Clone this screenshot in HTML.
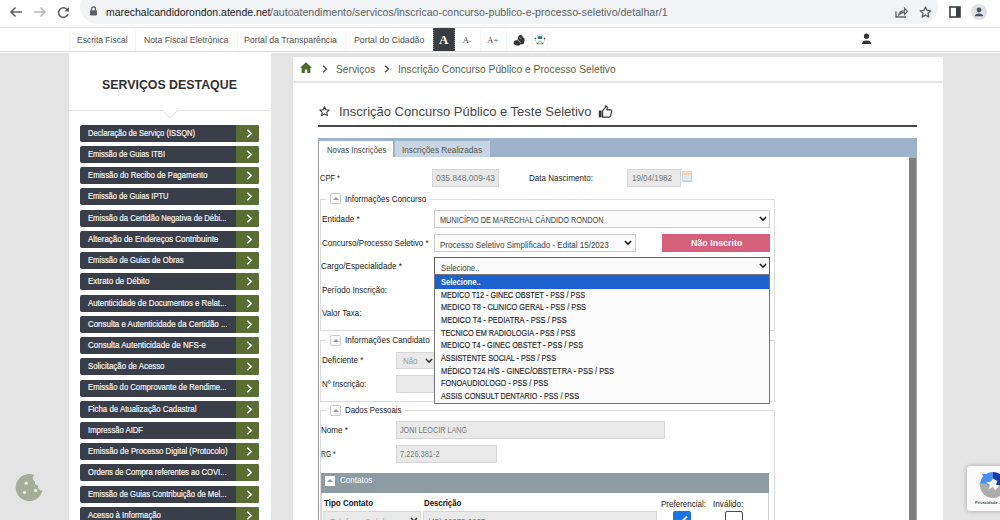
<!DOCTYPE html>
<html><head><meta charset="utf-8">
<style>
*{box-sizing:border-box;margin:0;padding:0}
html,body{width:1000px;height:520px;overflow:hidden;background:#e4e4e4;font-family:"Liberation Sans",sans-serif;position:relative}
.a{position:absolute}
.t{position:absolute;white-space:nowrap;line-height:0;transform-origin:0 0;z-index:10}
.sep{position:absolute;top:28px;height:23px;width:0;border-left:1px dotted #ececec}
.btn{position:absolute;left:80px;width:179px;height:17px;background:#3a3e48;border-radius:2px;overflow:hidden}
.btn i{position:absolute;left:156px;top:0;width:23px;height:17px;background:#5a6e33}
.btn svg{position:absolute;left:166px;top:4px}
.fs{position:absolute;border:1px solid #dcdcdc}
.tog{position:absolute;width:11px;height:11px;border:1px solid #c5cacf;border-radius:2px;background:#fff}
.tog:after{content:"";position:absolute;left:2px;top:3px;border-left:3px solid transparent;border-right:3px solid transparent;border-bottom:3px solid #999}
.inp{position:absolute;background:#e9e9e9;border:1px solid #d6d6d6}
.sel{position:absolute;background:#fafafa;border:1px solid #cdcdcd}
</style></head><body>
<!-- browser toolbar -->
<div class="a" style="left:0;top:0;width:1000px;height:28px;background:#fff;border-bottom:1px solid #e3e3e3"></div>
<div class="a" style="left:80px;top:-12px;width:858px;height:36px;background:#f1f3f4;border-radius:18px"></div>
<svg class="a" style="left:9px;top:6px" width="14" height="12" viewBox="0 0 14 12"><path d="M13 6H2M6.5 1.5L2 6l4.5 4.5" fill="none" stroke="#5f6368" stroke-width="1.6"/></svg>
<svg class="a" style="left:33px;top:6px" width="14" height="12" viewBox="0 0 14 12"><path d="M1 6h11M7.5 1.5L12 6l-4.5 4.5" fill="none" stroke="#b5b8bb" stroke-width="1.6"/></svg>
<svg class="a" style="left:57px;top:6px" width="13" height="13" viewBox="0 0 13 13"><path d="M10.6 4.2A4.8 4.8 0 1 0 11 8" fill="none" stroke="#5f6368" stroke-width="1.6"/><path d="M12 1v4.6H7.4z" fill="#5f6368"/></svg>
<svg class="a" style="left:90px;top:6px" width="7" height="10" viewBox="0 0 7 10"><path d="M1.5 4.5V3a2 2 0 0 1 4 0v1.5" fill="none" stroke="#5f6368" stroke-width="1.3"/><rect x="0" y="4.3" width="7" height="5.2" rx="0.8" fill="#5f6368"/></svg>
<svg class="a" style="left:895px;top:7px" width="13" height="11" viewBox="0 0 13 11"><path d="M1 4.5V10h10" fill="none" stroke="#5f6368" stroke-width="1.3"/><path d="M3.5 8.5C4 5 6.5 3.8 9.5 3.8V1.2L12.5 4.5 9.5 7.6V5.3C7 5.3 5 6.2 3.5 8.5z" fill="none" stroke="#5f6368" stroke-width="1.2"/></svg>
<svg class="a" style="left:919px;top:6px" width="13" height="12" viewBox="0 0 13 12"><path d="M6.5 1l1.6 3.4 3.7.4-2.8 2.5.8 3.7-3.3-1.9-3.3 1.9.8-3.7L1.2 4.8l3.7-.4z" fill="none" stroke="#5f6368" stroke-width="1.3" stroke-linejoin="round"/></svg>
<svg class="a" style="left:949px;top:6px" width="12" height="12" viewBox="0 0 12 12"><rect x="1" y="1" width="10" height="10" fill="none" stroke="#3c4043" stroke-width="1.6"/><rect x="7" y="1" width="4" height="10" fill="#3c4043"/></svg>
<div class="a" style="left:971px;top:4px;width:16px;height:16px;border-radius:8px;background:#dfe1e5"></div>
<svg class="a" style="left:971px;top:4px" width="16" height="16" viewBox="0 0 16 16"><circle cx="8" cy="6" r="2.4" fill="#4a5568"/><path d="M3.8 12.2c0-1.8 2-2.8 4.2-2.8s4.2 1 4.2 2.8z" fill="#4a5568"/></svg>

<!-- gov menu -->
<div class="a" style="left:0;top:28px;width:1000px;height:25px;background:#fff"></div><div class="a" style="left:0;top:51px;width:1000px;height:1px;background:#d9d9d9"></div>
<div class="sep" style="left:69px"></div>
<div class="sep" style="left:135px"></div>
<div class="sep" style="left:237px"></div>
<div class="sep" style="left:345px"></div>
<div class="a" style="left:433px;top:28px;width:22px;height:23px;background:#3a3d42;border-left:1px dotted #888;border-right:1px dotted #888"></div>
<div class="a" style="left:439px;top:33px;font-family:'Liberation Serif',serif;font-weight:bold;font-size:13px;line-height:13px;color:#fff">A</div>
<div class="a" style="left:462.5px;top:35.5px;font-family:'Liberation Serif',serif;font-size:9px;line-height:9px;color:#555">A<span style="font-size:7px">-</span></div>
<div class="a" style="left:487px;top:35.5px;font-family:'Liberation Serif',serif;font-size:9px;line-height:9px;color:#555">A+</div>
<div class="sep" style="left:480px"></div>
<div class="sep" style="left:506px"></div>
<div class="sep" style="left:532px"></div>
<div class="sep" style="left:547px"></div>
<svg class="a" style="left:513px;top:34px" width="13" height="13" viewBox="0 0 13 13"><path d="M6.5 1.2c1.3-.6 2.6 0 3 1.1l.3 1c1.3.3 2 1.4 1.8 2.7l-.4 2.2c-.3 1.6-1.6 2.4-3 2.2L7.6 10c-.6 1.4-2 2-3.4 1.6L2.4 11C.9 10.6.4 9.4.7 8.2 1 7 2 6.3 3.2 6.3h1.4L5 3.6c.1-1 .6-2 1.5-2.4z" fill="#353535"/><path d="M5 6.6c1 0 2 .8 2.3 2" fill="none" stroke="#ddd" stroke-width="0.8"/><path d="M6.2 3.8c.9.1 1.7.6 2.1 1.4" fill="none" stroke="#ccc" stroke-width="0.7"/></svg>
<svg class="a" style="left:534px;top:33px" width="12" height="13" viewBox="0 0 12 13"><circle cx="6" cy="6.5" r="4.6" fill="none" stroke="#bbb" stroke-width="0.9" stroke-dasharray="1.5 1"/><rect x="3.6" y="3.3" width="4.8" height="2.8" rx="1" fill="#1f7a73"/><path d="M3.5 10.8L6 7.5l2.5 3.3z" fill="#fff" stroke="#6a8a5a" stroke-width="0.7"/><circle cx="1.5" cy="5.5" r="0.8" fill="#444"/><circle cx="10.5" cy="5.5" r="0.8" fill="#444"/><circle cx="3.2" cy="10.5" r="0.7" fill="#444"/><circle cx="8.8" cy="10.5" r="0.7" fill="#444"/></svg>
<svg class="a" style="left:861px;top:33px" width="11" height="12" viewBox="0 0 11 12"><circle cx="5.5" cy="3.2" r="2.6" fill="#333"/><path d="M1 11c0-2.5 1.5-3.5 4.5-3.5S10 8.5 10 11z" fill="#333"/></svg>

<!-- sidebar -->
<div class="a" style="left:69px;top:53px;width:202px;height:467px;background:#fff"></div>
<div class="a" style="left:69px;top:110px;width:202px;height:1px;background:#e6e6e6"></div>
<svg class="a" style="left:161px;top:109px" width="18" height="10" viewBox="0 0 18 10"><path d="M0 1h18L9 9z" fill="#fff"/><path d="M1 1L9 8.6 17 1" fill="none" stroke="#dcdcdc" stroke-width="1"/></svg>
<div class="btn" style="top:124.80px"><i></i><svg width="7" height="9" viewBox="0 0 7 9"><path d="M1.2 0.8L5.2 4.5 1.2 8.2" fill="none" stroke="#fff" stroke-width="1.5"/></svg></div>
<div class="btn" style="top:146.03px"><i></i><svg width="7" height="9" viewBox="0 0 7 9"><path d="M1.2 0.8L5.2 4.5 1.2 8.2" fill="none" stroke="#fff" stroke-width="1.5"/></svg></div>
<div class="btn" style="top:167.26px"><i></i><svg width="7" height="9" viewBox="0 0 7 9"><path d="M1.2 0.8L5.2 4.5 1.2 8.2" fill="none" stroke="#fff" stroke-width="1.5"/></svg></div>
<div class="btn" style="top:188.49px"><i></i><svg width="7" height="9" viewBox="0 0 7 9"><path d="M1.2 0.8L5.2 4.5 1.2 8.2" fill="none" stroke="#fff" stroke-width="1.5"/></svg></div>
<div class="btn" style="top:209.72px"><i></i><svg width="7" height="9" viewBox="0 0 7 9"><path d="M1.2 0.8L5.2 4.5 1.2 8.2" fill="none" stroke="#fff" stroke-width="1.5"/></svg></div>
<div class="btn" style="top:230.95px"><i></i><svg width="7" height="9" viewBox="0 0 7 9"><path d="M1.2 0.8L5.2 4.5 1.2 8.2" fill="none" stroke="#fff" stroke-width="1.5"/></svg></div>
<div class="btn" style="top:252.18px"><i></i><svg width="7" height="9" viewBox="0 0 7 9"><path d="M1.2 0.8L5.2 4.5 1.2 8.2" fill="none" stroke="#fff" stroke-width="1.5"/></svg></div>
<div class="btn" style="top:273.41px"><i></i><svg width="7" height="9" viewBox="0 0 7 9"><path d="M1.2 0.8L5.2 4.5 1.2 8.2" fill="none" stroke="#fff" stroke-width="1.5"/></svg></div>
<div class="btn" style="top:294.64px"><i></i><svg width="7" height="9" viewBox="0 0 7 9"><path d="M1.2 0.8L5.2 4.5 1.2 8.2" fill="none" stroke="#fff" stroke-width="1.5"/></svg></div>
<div class="btn" style="top:315.87px"><i></i><svg width="7" height="9" viewBox="0 0 7 9"><path d="M1.2 0.8L5.2 4.5 1.2 8.2" fill="none" stroke="#fff" stroke-width="1.5"/></svg></div>
<div class="btn" style="top:337.10px"><i></i><svg width="7" height="9" viewBox="0 0 7 9"><path d="M1.2 0.8L5.2 4.5 1.2 8.2" fill="none" stroke="#fff" stroke-width="1.5"/></svg></div>
<div class="btn" style="top:358.33px"><i></i><svg width="7" height="9" viewBox="0 0 7 9"><path d="M1.2 0.8L5.2 4.5 1.2 8.2" fill="none" stroke="#fff" stroke-width="1.5"/></svg></div>
<div class="btn" style="top:379.56px"><i></i><svg width="7" height="9" viewBox="0 0 7 9"><path d="M1.2 0.8L5.2 4.5 1.2 8.2" fill="none" stroke="#fff" stroke-width="1.5"/></svg></div>
<div class="btn" style="top:400.79px"><i></i><svg width="7" height="9" viewBox="0 0 7 9"><path d="M1.2 0.8L5.2 4.5 1.2 8.2" fill="none" stroke="#fff" stroke-width="1.5"/></svg></div>
<div class="btn" style="top:422.02px"><i></i><svg width="7" height="9" viewBox="0 0 7 9"><path d="M1.2 0.8L5.2 4.5 1.2 8.2" fill="none" stroke="#fff" stroke-width="1.5"/></svg></div>
<div class="btn" style="top:443.25px"><i></i><svg width="7" height="9" viewBox="0 0 7 9"><path d="M1.2 0.8L5.2 4.5 1.2 8.2" fill="none" stroke="#fff" stroke-width="1.5"/></svg></div>
<div class="btn" style="top:464.48px"><i></i><svg width="7" height="9" viewBox="0 0 7 9"><path d="M1.2 0.8L5.2 4.5 1.2 8.2" fill="none" stroke="#fff" stroke-width="1.5"/></svg></div>
<div class="btn" style="top:485.71px"><i></i><svg width="7" height="9" viewBox="0 0 7 9"><path d="M1.2 0.8L5.2 4.5 1.2 8.2" fill="none" stroke="#fff" stroke-width="1.5"/></svg></div>
<div class="btn" style="top:506.94px"><i></i><svg width="7" height="9" viewBox="0 0 7 9"><path d="M1.2 0.8L5.2 4.5 1.2 8.2" fill="none" stroke="#fff" stroke-width="1.5"/></svg></div>
<!-- cookie -->
<svg class="a" style="left:14px;top:473px" width="30" height="30" viewBox="0 0 30 30"><path d="M20.5 2.2A13.5 13.5 0 1 0 28.4 17.5 3.5 3.5 0 0 1 24.5 12.5 3.2 3.2 0 0 1 21 8.5 3.5 3.5 0 0 1 20.5 2.2z" fill="#a5ac99"/><circle cx="12.2" cy="10.2" r="1.7" fill="#e6e8df"/><circle cx="10.5" cy="19.5" r="1.7" fill="#e6e8df"/><circle cx="21.7" cy="17.5" r="1.7" fill="#e6e8df"/></svg>

<!-- main panels -->
<div class="a" style="left:293px;top:57px;width:650px;height:23.5px;background:#fff"></div>
<div class="a" style="left:293px;top:83px;width:650px;height:437px;background:#fff"></div>
<svg class="a" style="left:300px;top:62px" width="12" height="11" viewBox="0 0 12 11"><path d="M6 0.3L0 5.8h1.6V11h3.2V7.6h2.4V11h3.2V5.8H12z" fill="#4c6a2e"/></svg>
<svg class="a" style="left:322px;top:65px" width="6" height="8" viewBox="0 0 6 8"><path d="M1 0.8L4.6 4 1 7.2" fill="none" stroke="#444" stroke-width="1.2"/></svg>
<svg class="a" style="left:384px;top:65px" width="6" height="8" viewBox="0 0 6 8"><path d="M1 0.8L4.6 4 1 7.2" fill="none" stroke="#444" stroke-width="1.2"/></svg>
<svg class="a" style="left:318.5px;top:105.5px" width="11" height="11" viewBox="0 0 12 12"><path d="M6 0.8l1.5 3.3 3.6.4-2.7 2.4.8 3.6L6 8.7 2.8 10.5l.8-3.6L0.9 4.5l3.6-.4z" fill="none" stroke="#333" stroke-width="1.1" stroke-linejoin="round"/></svg>
<svg class="a" style="left:598px;top:105px" width="15" height="13" viewBox="0 0 15 13"><rect x="0.8" y="5.5" width="2.8" height="6.8" fill="#333"/><path d="M4.6 5.8L7.4 2.4V0.8c1.2 0 1.9.9 1.9 2L8.8 4.8h3.5c.9 0 1.5.8 1.3 1.6l-.9 4.3c-.2.8-.8 1.4-1.6 1.4H4.6z" fill="none" stroke="#333" stroke-width="1.15" stroke-linejoin="round"/></svg>
<div class="a" style="left:318px;top:125px;width:599px;height:2px;background:#474747"></div>

<!-- tab container -->
<div class="a" style="left:318px;top:138px;width:599px;height:19px;background:#9db3cb"></div>
<div class="a" style="left:319px;top:141px;width:74px;height:16px;background:#fff"></div>
<div class="a" style="left:395px;top:141px;width:95px;height:16px;background:#c9d5e2"></div>
<div class="a" style="left:318px;top:141px;width:1px;height:379px;background:#969696"></div>
<div class="a" style="left:909px;top:157px;width:7px;height:363px;background:#7f7f7f"></div><div class="a" style="left:916px;top:157px;width:1px;height:363px;background:#a8a8a8"></div><div class="a" style="left:909px;top:157px;width:8px;height:1px;background:#b0b0b0"></div>

<!-- form -->
<div class="inp" style="left:432px;top:169px;width:67px;height:18px"></div>
<div class="inp" style="left:627px;top:169px;width:54px;height:18px"></div>
<svg class="a" style="left:682px;top:171px" width="10" height="11" viewBox="0 0 10 11"><rect x="0.5" y="0.5" width="9" height="10" fill="#f7f9fc" stroke="#d3d8de"/><rect x="1" y="1.5" width="8" height="2.5" fill="#f0d2bc"/><rect x="1" y="4.5" width="8" height="4" fill="#dfe8f3"/><rect x="0.5" y="9.3" width="9" height="1.2" fill="#c8ccd0"/></svg>

<div class="fs" style="left:320px;top:199px;width:455px;height:132px"></div>
<div class="a" style="left:326px;top:193px;width:104px;height:12px;background:#fff"></div>
<div class="tog" style="left:330px;top:193px"></div>

<div class="sel" style="left:434px;top:210px;width:336px;height:18px"></div>
<svg class="a" style="left:759px;top:216px" width="8" height="6" viewBox="0 0 8 6"><path d="M1 1l3 3.2L7 1" fill="none" stroke="#111" stroke-width="1.6"/></svg>
<div class="sel" style="left:434px;top:234px;width:202px;height:18px"></div>
<svg class="a" style="left:624px;top:240px" width="8" height="6" viewBox="0 0 8 6"><path d="M1 1l3 3.2L7 1" fill="none" stroke="#111" stroke-width="1.6"/></svg>
<div class="a" style="left:662px;top:234px;width:108px;height:18px;background:#d4607b"></div>
<div class="a" style="left:434px;top:257px;width:336px;height:18px;background:#fafafa;border:1px solid #5e5e52"></div>
<svg class="a" style="left:759px;top:263px" width="8" height="6" viewBox="0 0 8 6"><path d="M1 1l3 3.2L7 1" fill="none" stroke="#111" stroke-width="1.6"/></svg>

<div class="fs" style="left:320px;top:340px;width:455px;height:62px"></div>
<div class="a" style="left:326px;top:334px;width:108px;height:12px;background:#fff"></div>
<div class="tog" style="left:330px;top:335px"></div>
<div class="a" style="left:396px;top:352px;width:40px;height:17px;background:#e9e9e9;border:1px solid #d6d6d6"></div>
<svg class="a" style="left:425px;top:358px" width="8" height="6" viewBox="0 0 8 6"><path d="M1 1l3 3.2L7 1" fill="none" stroke="#333" stroke-width="1.6"/></svg>
<div class="inp" style="left:396px;top:375px;width:40px;height:18px"></div>

<div class="fs" style="left:320px;top:410px;width:455px;height:120px"></div>
<div class="a" style="left:326px;top:404px;width:78px;height:12px;background:#fff"></div>
<div class="tog" style="left:330px;top:405px"></div>
<div class="inp" style="left:396px;top:421px;width:269px;height:18px"></div>
<div class="inp" style="left:396px;top:445px;width:101px;height:18px"></div>

<div class="a" style="left:321px;top:473px;width:448px;height:20px;background:#8e9ba3"></div>
<div class="a" style="left:325px;top:476px;width:10px;height:10px;background:#fff"></div>
<div class="a" style="left:327px;top:479px;border-left:3px solid transparent;border-right:3px solid transparent;border-bottom:3px solid #8e9ba3"></div>
<div class="a" style="left:321px;top:493px;width:448px;height:30px;border:1px solid #d0d0d0;border-top:0"></div>
<div class="inp" style="left:323px;top:511px;width:98px;height:18px"></div>
<svg class="a" style="left:410px;top:517px" width="8" height="6" viewBox="0 0 8 6"><path d="M1 1l3 3.2L7 1" fill="none" stroke="#333" stroke-width="1.6"/></svg>
<div class="inp" style="left:423px;top:511px;width:234px;height:18px"></div>
<div class="a" style="left:673px;top:511px;width:18px;height:18px;background:#1a73e8;border-radius:2px"></div>
<svg class="a" style="left:673px;top:511px" width="18" height="18" viewBox="0 0 18 18"><path d="M4 9.5l3 3 7-7" fill="none" stroke="#fff" stroke-width="2"/></svg>
<div class="a" style="left:725px;top:511px;width:18px;height:18px;background:#fff;border:1px solid #4a4a4a;border-radius:2px"></div>

<!-- dropdown -->
<div class="a" style="left:434px;top:274px;width:336px;height:130px;background:#fbfbfb;border:1px solid #767676;z-index:15"></div>
<div class="a" style="left:435px;top:275px;width:334px;height:13.5px;background:#1b62cf;z-index:16"></div>

<!-- recaptcha -->
<div class="a" style="left:967px;top:466px;width:40px;height:45px;background:#f9f9f9;border-radius:3px;box-shadow:0 0 4px rgba(0,0,0,0.3)"></div>
<svg class="a" style="left:979px;top:471px" width="28" height="28" viewBox="0 0 28 28"><path d="M14 1A13 13 0 0 0 1 14h13z" fill="#4a8ef0"/><path d="M14 1v13h13A13 13 0 0 0 14 1z" fill="#1a3bab"/><path d="M1 14a13 13 0 0 0 26 0z" fill="#ababab"/><path d="M3 2.5l7 1.2-4.5 5z" fill="#4a8ef0"/><path d="M0 12.5h9l-4.5 6z" fill="#ababab"/><path d="M14 7.5L18.5 10 17 13.5 20.5 15 16 19.5 14 16 9.5 18.5 11 14 7.5 11.5 12 10.5z" fill="#f9f9f9"/></svg>
<div class="a" style="left:975px;top:501px;font-size:4px;line-height:4px;color:#555;font-weight:bold;white-space:nowrap">Privacidade - T</div>

<div class="t" style="left:105.50px;top:11.79px;font-size:11px;color:#202124;transform:scaleX(0.9504);">marechalcandidorondon.atende.net</div>
<div class="t" style="left:270.00px;top:11.79px;font-size:11px;color:#5f6368;transform:scaleX(0.9634);">/autoatendimento/servicos/inscricao-concurso-publico-e-processo-seletivo/detalhar/1</div>
<div class="t" style="left:77.00px;top:39.88px;font-size:9px;color:#505050;transform:scaleX(0.9455);">Escrita Fiscal</div>
<div class="t" style="left:143.60px;top:39.88px;font-size:9px;color:#505050;transform:scaleX(0.9641);">Nota Fiscal Eletrônica</div>
<div class="t" style="left:244.00px;top:39.88px;font-size:9px;color:#505050;transform:scaleX(0.9732);">Portal da Transparência</div>
<div class="t" style="left:353.60px;top:39.88px;font-size:9px;color:#505050;transform:scaleX(0.9769);">Portal do Cidadão</div>
<div class="t" style="left:102.00px;top:85.40px;font-size:13px;color:#303030;font-weight:bold;transform:scaleX(0.9512);">SERVIÇOS DESTAQUE</div>
<div class="t" style="left:87.50px;top:132.68px;font-size:9px;color:#f4f4f4;transform:scaleX(0.8430);-webkit-text-stroke:0.2px #f4f4f4;">Declaração de Serviço (ISSQN)</div>
<div class="t" style="left:87.50px;top:153.91px;font-size:9px;color:#f4f4f4;transform:scaleX(0.8365);-webkit-text-stroke:0.2px #f4f4f4;">Emissão de Guias ITBI</div>
<div class="t" style="left:87.50px;top:175.14px;font-size:9px;color:#f4f4f4;transform:scaleX(0.8622);-webkit-text-stroke:0.2px #f4f4f4;">Emissão do Recibo de Pagamento</div>
<div class="t" style="left:87.50px;top:196.37px;font-size:9px;color:#f4f4f4;transform:scaleX(0.8381);-webkit-text-stroke:0.2px #f4f4f4;">Emissão de Guias IPTU</div>
<div class="t" style="left:87.50px;top:217.60px;font-size:9px;color:#f4f4f4;transform:scaleX(0.8518);-webkit-text-stroke:0.2px #f4f4f4;">Emissão da Certidão Negativa de Débi...</div>
<div class="t" style="left:87.50px;top:238.83px;font-size:9px;color:#f4f4f4;transform:scaleX(0.8858);-webkit-text-stroke:0.2px #f4f4f4;">Alteração de Endereços Contribuinte</div>
<div class="t" style="left:87.50px;top:260.06px;font-size:9px;color:#f4f4f4;transform:scaleX(0.8484);-webkit-text-stroke:0.2px #f4f4f4;">Emissão de Guias de Obras</div>
<div class="t" style="left:87.50px;top:281.29px;font-size:9px;color:#f4f4f4;transform:scaleX(0.8843);-webkit-text-stroke:0.2px #f4f4f4;">Extrato de Débito</div>
<div class="t" style="left:87.50px;top:302.52px;font-size:9px;color:#f4f4f4;transform:scaleX(0.8732);-webkit-text-stroke:0.2px #f4f4f4;">Autenticidade de Documentos e Relat...</div>
<div class="t" style="left:87.50px;top:323.75px;font-size:9px;color:#f4f4f4;transform:scaleX(0.8795);-webkit-text-stroke:0.2px #f4f4f4;">Consulta e Autenticidade da Certidão ...</div>
<div class="t" style="left:87.50px;top:344.98px;font-size:9px;color:#f4f4f4;transform:scaleX(0.8866);-webkit-text-stroke:0.2px #f4f4f4;">Consulta Autenticidade de NFS-e</div>
<div class="t" style="left:87.50px;top:366.21px;font-size:9px;color:#f4f4f4;transform:scaleX(0.8737);-webkit-text-stroke:0.2px #f4f4f4;">Solicitação de Acesso</div>
<div class="t" style="left:87.50px;top:387.44px;font-size:9px;color:#f4f4f4;transform:scaleX(0.8544);-webkit-text-stroke:0.2px #f4f4f4;">Emissão do Comprovante de Rendime...</div>
<div class="t" style="left:87.50px;top:408.67px;font-size:9px;color:#f4f4f4;transform:scaleX(0.8744);-webkit-text-stroke:0.2px #f4f4f4;">Ficha de Atualização Cadastral</div>
<div class="t" style="left:87.50px;top:429.90px;font-size:9px;color:#f4f4f4;transform:scaleX(0.8523);-webkit-text-stroke:0.2px #f4f4f4;">Impressão AIDF</div>
<div class="t" style="left:87.50px;top:451.13px;font-size:9px;color:#f4f4f4;transform:scaleX(0.8660);-webkit-text-stroke:0.2px #f4f4f4;">Emissão de Processo Digital (Protocolo)</div>
<div class="t" style="left:87.50px;top:472.36px;font-size:9px;color:#f4f4f4;transform:scaleX(0.8441);-webkit-text-stroke:0.2px #f4f4f4;">Ordens de Compra referentes ao COVI...</div>
<div class="t" style="left:87.50px;top:493.59px;font-size:9px;color:#f4f4f4;transform:scaleX(0.8493);-webkit-text-stroke:0.2px #f4f4f4;">Emissão de Guias Contribuição de Mel...</div>
<div class="t" style="left:87.50px;top:514.82px;font-size:9px;color:#f4f4f4;transform:scaleX(0.8622);-webkit-text-stroke:0.2px #f4f4f4;">Acesso à Informação</div>
<div class="t" style="left:335.80px;top:68.69px;font-size:11px;color:#5a5f48;transform:scaleX(0.9292);">Serviços</div>
<div class="t" style="left:398.40px;top:68.69px;font-size:11px;color:#5a5f48;transform:scaleX(0.9317);">Inscrição Concurso Público e Processo Seletivo</div>
<div class="t" style="left:338.50px;top:111.97px;font-size:12.5px;color:#474747;transform:scaleX(1.0393);">Inscrição Concurso Público e Teste Seletivo</div>
<div class="t" style="left:326.70px;top:149.88px;font-size:9px;color:#444;transform:scaleX(0.8653);">Novas Inscrições</div>
<div class="t" style="left:402.00px;top:149.88px;font-size:9px;color:#555;transform:scaleX(0.9138);">Inscrições Realizadas</div>
<div class="t" style="left:319.50px;top:178.48px;font-size:9px;color:#222;transform:scaleX(0.8328);">CPF *</div>
<div class="t" style="left:435.50px;top:178.48px;font-size:9px;color:#777;transform:scaleX(0.9356);">035.848.009-43</div>
<div class="t" style="left:529.00px;top:178.18px;font-size:9px;color:#222;transform:scaleX(0.8947);">Data Nascimento:</div>
<div class="t" style="left:631.50px;top:178.18px;font-size:9px;color:#777;transform:scaleX(0.8880);">19/04/1982</div>
<div class="t" style="left:344.70px;top:198.71px;font-size:9.5px;color:#222;transform:scaleX(0.8506);">Informações Concurso</div>
<div class="t" style="left:321.60px;top:219.38px;font-size:9px;color:#222;transform:scaleX(0.9074);">Entidade *</div>
<div class="t" style="left:440.20px;top:220.28px;font-size:9px;color:#444;transform:scaleX(0.8132);">MUNICÍPIO DE MARECHAL CÂNDIDO RONDON</div>
<div class="t" style="left:321.60px;top:243.18px;font-size:9px;color:#222;transform:scaleX(0.8962);">Concurso/Processo Seletivo *</div>
<div class="t" style="left:440.20px;top:244.58px;font-size:9px;color:#444;transform:scaleX(0.8950);">Processo Seletivo Simplificado - Edital 15/2023</div>
<div class="t" style="left:690.60px;top:242.98px;font-size:9px;color:#fff;font-weight:bold;transform:scaleX(0.9882);">Não Inscrito</div>
<div class="t" style="left:321.00px;top:266.08px;font-size:9px;color:#222;transform:scaleX(0.9095);">Cargo/Especialidade *</div>
<div class="t" style="left:441.00px;top:267.88px;font-size:9px;color:#444;transform:scaleX(0.8623);">Selecione..</div>
<div class="t" style="left:321.50px;top:289.88px;font-size:9px;color:#222;transform:scaleX(0.8946);">Período Inscrição:</div>
<div class="t" style="left:321.50px;top:313.18px;font-size:9px;color:#222;transform:scaleX(0.8936);">Valor Taxa:</div>
<div class="t" style="left:344.80px;top:339.51px;font-size:9.5px;color:#222;transform:scaleX(0.8622);">Informações Candidato</div>
<div class="t" style="left:321.50px;top:359.58px;font-size:9px;color:#222;transform:scaleX(0.8994);">Deficiente *</div>
<div class="t" style="left:402.50px;top:361.28px;font-size:9px;color:#999;transform:scaleX(0.8780);">Não</div>
<div class="t" style="left:321.50px;top:383.68px;font-size:9px;color:#222;transform:scaleX(0.8718);">Nº Inscrição:</div>
<div class="t" style="left:344.60px;top:410.11px;font-size:9.5px;color:#222;transform:scaleX(0.8215);">Dados Pessoais</div>
<div class="t" style="left:321.00px;top:429.88px;font-size:9px;color:#222;transform:scaleX(0.8995);">Nome *</div>
<div class="t" style="left:399.70px;top:430.18px;font-size:9px;color:#7a7a7a;transform:scaleX(0.8033);">JONI LEOCIR LANG</div>
<div class="t" style="left:321.00px;top:454.08px;font-size:9px;color:#222;transform:scaleX(0.7532);">RG *</div>
<div class="t" style="left:399.70px;top:453.88px;font-size:9px;color:#7a7a7a;transform:scaleX(0.8242);">7.226.381-2</div>
<div class="t" style="left:340.00px;top:479.71px;font-size:9.5px;color:#fff;transform:scaleX(0.8519);">Contatos</div>
<div class="t" style="left:323.70px;top:503.48px;font-size:9px;color:#111;font-weight:bold;transform:scaleX(0.8856);">Tipo Contato</div>
<div class="t" style="left:423.70px;top:503.48px;font-size:9px;color:#111;font-weight:bold;transform:scaleX(0.8668);">Descrição</div>
<div class="t" style="left:660.50px;top:503.58px;font-size:9px;color:#222;transform:scaleX(0.8925);">Preferencial:</div>
<div class="t" style="left:712.80px;top:503.58px;font-size:9px;color:#222;transform:scaleX(0.9066);">Inválido:</div>
<div class="t" style="left:330.00px;top:521.88px;font-size:9px;color:#aaa;transform:scaleX(0.9532);">Telefone Celular</div>
<div class="t" style="left:428.00px;top:521.88px;font-size:9px;color:#777;transform:scaleX(0.8563);">(45) 99973-2267</div>
<div class="t" style="left:441.00px;top:281.88px;font-size:9px;color:#fff;font-weight:bold;transform:scaleX(0.8420);z-index:20;">Selecione..</div>
<div class="t" style="left:441.00px;top:294.55px;font-size:9px;color:#262626;transform:scaleX(0.7990);z-index:20;-webkit-text-stroke:0.15px #262626;">MEDICO T12 - GINEC OBSTET - PSS / PSS</div>
<div class="t" style="left:441.00px;top:307.22px;font-size:9px;color:#262626;transform:scaleX(0.8167);z-index:20;-webkit-text-stroke:0.15px #262626;">MEDICO T8 - CLINICO GERAL - PSS / PSS</div>
<div class="t" style="left:441.00px;top:319.89px;font-size:9px;color:#262626;transform:scaleX(0.8252);z-index:20;-webkit-text-stroke:0.15px #262626;">MEDICO T4 - PEDIATRA - PSS / PSS</div>
<div class="t" style="left:441.00px;top:332.56px;font-size:9px;color:#262626;transform:scaleX(0.8088);z-index:20;-webkit-text-stroke:0.15px #262626;">TECNICO EM RADIOLOGIA - PSS / PSS</div>
<div class="t" style="left:441.00px;top:345.23px;font-size:9px;color:#262626;transform:scaleX(0.8105);z-index:20;-webkit-text-stroke:0.15px #262626;">MEDICO T4 - GINEC OBSTET - PSS / PSS</div>
<div class="t" style="left:441.00px;top:357.90px;font-size:9px;color:#262626;transform:scaleX(0.8058);z-index:20;-webkit-text-stroke:0.15px #262626;">ASSISTENTE SOCIAL - PSS / PSS</div>
<div class="t" style="left:441.00px;top:370.57px;font-size:9px;color:#262626;transform:scaleX(0.8242);z-index:20;-webkit-text-stroke:0.15px #262626;">MÉDICO T24 H/S - GINEC/OBSTETRA - PSS / PSS</div>
<div class="t" style="left:441.00px;top:383.24px;font-size:9px;color:#262626;transform:scaleX(0.8104);z-index:20;-webkit-text-stroke:0.15px #262626;">FONOAUDIOLOGO - PSS / PSS</div>
<div class="t" style="left:441.00px;top:395.91px;font-size:9px;color:#262626;transform:scaleX(0.8068);z-index:20;-webkit-text-stroke:0.15px #262626;">ASSIS CONSULT DENTARIO - PSS / PSS</div>
</body></html>
